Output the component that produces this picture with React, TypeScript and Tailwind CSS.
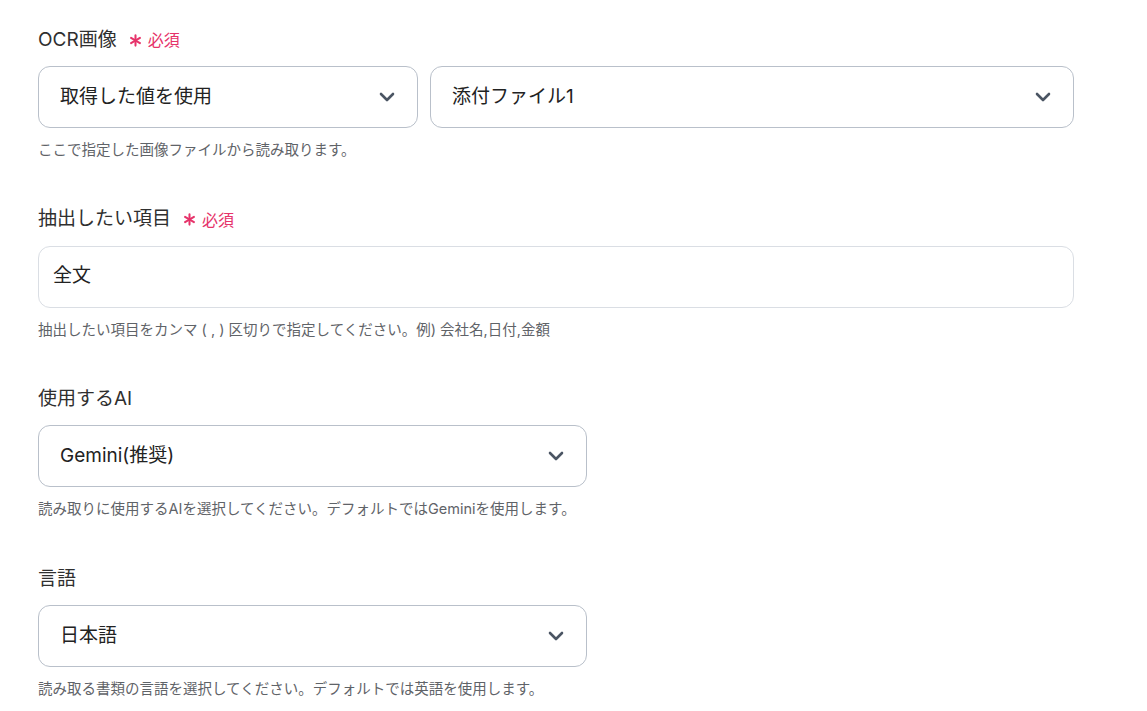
import { ReactNode } from "react";

const font = "font-['Inter','Noto_Sans_CJK_JP',sans-serif]";

const Chevron = () => (
  <svg width="16" height="10" viewBox="0 0 16 10" className="shrink-0">
    <path d="M2 2 L8 8 L14 2" fill="none" stroke="#4b5563" strokeWidth="2.6" strokeLinecap="round" strokeLinejoin="round" />
  </svg>
);

const Required = () => (
  <span className="ml-[12px] flex items-center gap-[6px] text-[16px] text-[#e6336a]">
    <svg width="13" height="13" viewBox="0 0 14 14">
      <g stroke="#e6336a" strokeWidth="2.2" strokeLinecap="round">
        <line x1="7" y1="1.5" x2="7" y2="12.5" />
        <line x1="2.2" y1="4.2" x2="11.8" y2="9.8" />
        <line x1="2.2" y1="9.8" x2="11.8" y2="4.2" />
      </g>
    </svg>
    必須
  </span>
);

const Field = ({ label, required, help, children }: { label: string; required?: boolean; help: string; children: ReactNode }) => (
  <div className="flex flex-col">
    <div className="flex h-[28px] items-center text-[19px] text-[#2f2f2f]">
      {label}
      {required && <Required />}
    </div>
    <div className="mt-[12px]">{children}</div>
    <p className="mt-[12px] h-[20px] text-[14.5px] leading-[20px] text-[#5f6368]">{help}</p>
  </div>
);

const Select = ({ value, className }: { value: string; className: string }) => (
  <div className={`flex h-[62px] items-center justify-between rounded-[12px] border border-[#b9c0ca] bg-white pl-[21px] pr-[22px] text-[19px] text-[#222] ${className}`}>
    <span>{value}</span>
    <Chevron />
  </div>
);

export default function App() {
  return (
    <div className={`min-h-screen bg-white ${font}`}>
      <div className="flex w-[1074px] flex-col gap-[45.7px] pl-[38px] pt-[26px]">
        <Field label="OCR画像" required help="ここで指定した画像ファイルから読み取ります。">
          <div className="flex gap-[12px]">
            <Select value="取得した値を使用" className="w-[380px]" />
            <Select value="添付ファイル1" className="flex-1" />
          </div>
        </Field>

        <Field label="抽出したい項目" required help="抽出したい項目をカンマ ( , ) 区切りで指定してください。例) 会社名,日付,金額">
          <div className="flex h-[62px] items-center rounded-[12px] border border-[#dadee4] bg-white px-[14px] text-[19px] text-[#222]">
            全文
          </div>
        </Field>

        <Field label="使用するAI" help="読み取りに使用するAIを選択してください。デフォルトではGeminiを使用します。">
          <Select value="Gemini(推奨)" className="w-[549px]" />
        </Field>

        <Field label="言語" help="読み取る書類の言語を選択してください。デフォルトでは英語を使用します。">
          <Select value="日本語" className="w-[549px]" />
        </Field>
      </div>
    </div>
  );
}
